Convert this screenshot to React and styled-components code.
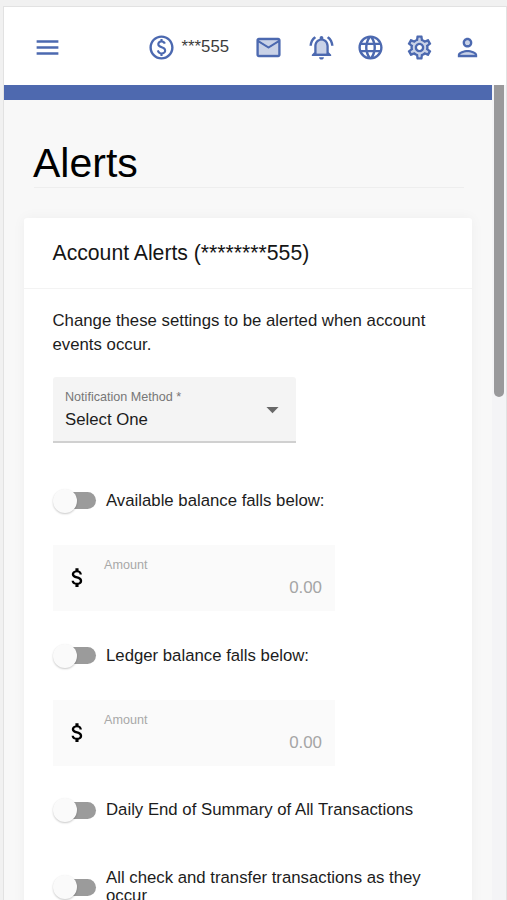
import styled, { createGlobalStyle } from "styled-components";
import {
  MdArrowDropDown,
  MdAttachMoney,
  MdLanguage,
  MdMenu,
  MdOutlinePaid,
  MdOutlineSettings,
} from "react-icons/md";

const GlobalStyle = createGlobalStyle`
  * {
    box-sizing: border-box;
  }

  body {
    margin: 0;
    overflow: hidden;
    background: #f1f1f1;
    font-family: "Liberation Sans", Arial, sans-serif;
    color: #1c1c1c;
  }
`;

// Styled Components
const Page = styled.div`
  height: 900px;
  padding: 6px 0 0 3px;
  overflow: hidden;
`;

const Frame = styled.div`
  display: flex;
  flex-direction: column;
  height: 100%;
  border: 1px solid #e2e2e2;
  border-bottom: none;
  background: #f8f8f8;
`;

const Header = styled.header`
  flex: none;
  display: flex;
  align-items: center;
  height: 78px;
  padding: 2px 24px 0 29px;
  background: #fff;
  color: #4c69b0;
`;

const IconButton = styled.button`
  display: flex;
  padding: 0;
  border: none;
  background: none;
  color: inherit;
  margin-left: ${(p) => p.$gap || 0}px;

  svg {
    width: 29px;
    height: 29px;
  }
`;

const AccountNumber = styled.span`
  width: 48px;
  margin-left: 5.5px;
  font-size: 16.8px;
  line-height: 20px;
  color: #3c3c3c;
`;

const Body = styled.div`
  flex: 1;
  display: flex;
  min-height: 0;
`;

const Content = styled.main`
  flex: 1;
  min-width: 0;
  overflow: hidden;
`;

const BlueBar = styled.div`
  height: 14.5px;
  background: #4e69af;
`;

const ScrollRail = styled.div`
  flex: none;
  width: 14px;
  padding-left: 2px;
  background: #f4f4f6;
`;

const ScrollThumb = styled.div`
  width: 10px;
  height: 312px;
  border-radius: 0 0 5px 5px;
  background: #99999b;
`;

const Title = styled.h1`
  margin: 39.5px 28px 0 30px;
  height: 49px;
  border-bottom: 1px solid #eeeeee;
  font-size: 41px;
  font-weight: 400;
  line-height: 48px;
  text-indent: -1px;
  color: #000;
`;

const Card = styled.section`
  margin: 30px 20px 0;
  height: 760px;
  border-radius: 3px;
  background: #fff;
  box-shadow: 0 0 14px rgba(0, 0, 0, 0.045);
`;

const CardTitle = styled.h2`
  margin: 0;
  height: 71px;
  padding-left: 28.5px;
  border-bottom: 1px solid #f3f3f3;
  font-size: 21.2px;
  font-weight: 400;
  line-height: 69px;
  color: #151515;
`;

const Form = styled.div`
  padding: 19.5px 28px 0 28.5px;
`;

const Intro = styled.p`
  margin: 0 0 20px;
  font-size: 16.77px;
  line-height: 24px;
`;

const SelectBox = styled.div`
  display: flex;
  align-items: center;
  justify-content: space-between;
  width: 243.5px;
  height: 66px;
  padding: 2px 9px 0 12.5px;
  border-bottom: 2px solid #d0d0d0;
  border-radius: 3px 3px 0 0;
  background: #f4f4f4;

  svg {
    width: 29px;
    height: 29px;
    color: #686868;
  }
`;

const Label = styled.div`
  font-size: 12.6px;
  line-height: 16px;
  color: ${(p) => (p.$muted ? "#a8a8a8" : "#777")};
`;

const SelectValue = styled.div`
  margin-top: 4px;
  font-size: 16.75px;
  line-height: 22px;
`;

const ToggleRow = styled.div`
  display: flex;
  align-items: center;
  height: 38px;
  margin-top: ${(p) => p.$top}px;
  font-size: 16.75px;
  line-height: 18px;
`;

const Track = styled.div`
  flex: none;
  display: flex;
  align-items: center;
  width: 41px;
  height: 17px;
  margin: 0 10px 0 2.5px;
  border-radius: 9px;
  background: #9b9b9b;
`;

const Knob = styled.div`
  width: 24px;
  height: 24px;
  margin-left: -2.5px;
  border-radius: 50%;
  background: #fafafa;
  box-shadow: 0 1px 2px rgba(0, 0, 0, 0.22);
`;

const AmountBox = styled.div`
  display: flex;
  width: 282.5px;
  height: 66px;
  margin-top: 25.5px;
  padding: 0 13px 0 12px;
  background: #fafafa;
  color: #000;

  > svg {
    flex: none;
    width: 25px;
    height: 25px;
    margin-top: 20px;
  }
`;

const AmountField = styled.div`
  flex: 1;
  margin-left: 14.5px;
  padding-top: 12px;
`;

const AmountValue = styled.div`
  margin-top: 4px;
  font-size: 16.9px;
  line-height: 22px;
  text-align: right;
  color: #a5a5a5;
`;

// Two tone icons
function MailIcon() {
  return (
    <svg viewBox="0 0 24 24" fill="currentColor">
      <path opacity=".3" d="M20 8l-8 5-8-5v10h16zm0-2H4l8 4.99z" />
      <path d="M4 20h16c1.1 0 2-.9 2-2V6c0-1.1-.9-2-2-2H4c-1.1 0-2 .9-2 2v12c0 1.1.9 2 2 2zM20 6l-8 4.99L4 6h16zM4 8l8 5 8-5v10H4V8z" />
    </svg>
  );
}

function BellIcon() {
  return (
    <svg viewBox="0 0 24 24" fill="currentColor">
      <path opacity=".3" d="M12 6.5c-2.49 0-4 2.02-4 4.5v6h8v-6c0-2.48-1.51-4.5-4-4.5z" />
      <path d="M12 22c1.1 0 2-.9 2-2h-4c0 1.1.9 2 2 2zm6-6v-5c0-3.07-1.63-5.64-4.5-6.32V4c0-.83-.67-1.5-1.5-1.5s-1.5.67-1.5 1.5v.68C7.64 5.36 6 7.92 6 11v5l-2 2v1h16v-1l-2-2zm-2 1H8v-6c0-2.48 1.51-4.5 4-4.5s4 2.02 4 4.5v6zM7.58 4.08L6.15 2.65C3.75 4.48 2.17 7.3 2.03 10.5h2c.15-2.65 1.51-4.97 3.55-6.42zm12.39 6.42h2c-.15-3.2-1.73-6.02-4.12-7.85l-1.42 1.43c2.02 1.45 3.39 3.77 3.54 6.42z" />
    </svg>
  );
}

function GearIcon() {
  return (
    <svg viewBox="0 0 29 29" fill="currentColor">
      <path
        opacity=".3"
        transform="scale(1.2083)"
        d="M19.28 8.6l-.7-1.21-1.27.51-1.06.43-.91-.7c-.39-.3-.8-.54-1.23-.71l-1.06-.43-.16-1.13L12.7 4h-1.4l-.19 1.35-.16 1.13-1.06.44c-.41.17-.82.41-1.25.73l-.9.68-1.05-.42-1.27-.52-.7 1.21 1.08.84.89.7-.14 1.13c-.03.3-.05.53-.05.73s.02.43.05.73l.14 1.13-.89.7-1.08.84.7 1.21 1.27-.51 1.06-.43.91.7c.39.3.8.54 1.23.71l1.06.43.16 1.13.19 1.36h1.39l.19-1.35.16-1.13 1.06-.43c.41-.17.82-.41 1.25-.73l.9-.68 1.04.42 1.27.51.7-1.21-1.08-.84-.89-.7.14-1.13c.04-.31.05-.52.05-.73 0-.21-.02-.43-.05-.73l-.14-1.13.89-.7 1.1-.84zM12 16c-2.21 0-4-1.79-4-4s1.79-4 4-4 4 1.79 4 4-1.79 4-4 4z"
      />
      <MdOutlineSettings />
    </svg>
  );
}

function PersonIcon() {
  return (
    <svg viewBox="0 0 24 24" fill="currentColor">
      <path opacity=".3" d="M12 16c-2.69 0-5.77 1.28-6 2h12c-.2-.71-3.3-2-6-2z" />
      <circle opacity=".3" cx="12" cy="8" r="2" />
      <path d="M12 12c2.21 0 4-1.79 4-4s-1.79-4-4-4-4 1.79-4 4 1.79 4 4 4zm0-6c1.1 0 2 .9 2 2s-.9 2-2 2-2-.9-2-2 .9-2 2-2zm0 8c-2.67 0-8 1.34-8 4v2h16v-2c0-2.66-5.33-4-8-4zm6 4H6c.23-.72 3.31-2 6-2s5.8 1.29 6 2z" />
    </svg>
  );
}

function Toggle({ label, top }) {
  return (
    <ToggleRow $top={top}>
      <Track>
        <Knob />
      </Track>
      <span>{label}</span>
    </ToggleRow>
  );
}

function Amount() {
  return (
    <AmountBox>
      <MdAttachMoney />
      <AmountField>
        <Label $muted>Amount</Label>
        <AmountValue>0.00</AmountValue>
      </AmountField>
    </AmountBox>
  );
}

export default function App() {
  return (
    <Page>
      <GlobalStyle />
      <Frame>
        <Header>
          <IconButton aria-label="Menu"><MdMenu /></IconButton>
          <IconButton aria-label="Account" $gap={85}><MdOutlinePaid /></IconButton>
          <AccountNumber>***555</AccountNumber>
          <IconButton aria-label="Messages" $gap={24.5}><MailIcon /></IconButton>
          <IconButton aria-label="Alerts" $gap={24}><BellIcon /></IconButton>
          <IconButton aria-label="Language" $gap={20}><MdLanguage /></IconButton>
          <IconButton aria-label="Settings" $gap={19.5}><GearIcon /></IconButton>
          <IconButton aria-label="Profile" $gap={19.5}><PersonIcon /></IconButton>
        </Header>

        <Body>
          <Content>
            <BlueBar />
            <Title>Alerts</Title>
            <Card>
              <CardTitle>Account Alerts (********555)</CardTitle>
              <Form>
                <Intro>Change these settings to be alerted when account events occur.</Intro>

                <SelectBox>
                  <div>
                    <Label>Notification Method *</Label>
                    <SelectValue>Select One</SelectValue>
                  </div>
                  <MdArrowDropDown />
                </SelectBox>

                <Toggle label="Available balance falls below:" top={39} />
                <Amount />
                <Toggle label="Ledger balance falls below:" top={25.5} />
                <Amount />
                <Toggle label="Daily End of Summary of All Transactions" top={25} />
                <Toggle label="All check and transfer transactions as they occur" top={39} />
              </Form>
            </Card>
          </Content>
          <ScrollRail>
            <ScrollThumb />
          </ScrollRail>
        </Body>
      </Frame>
    </Page>
  );
}
